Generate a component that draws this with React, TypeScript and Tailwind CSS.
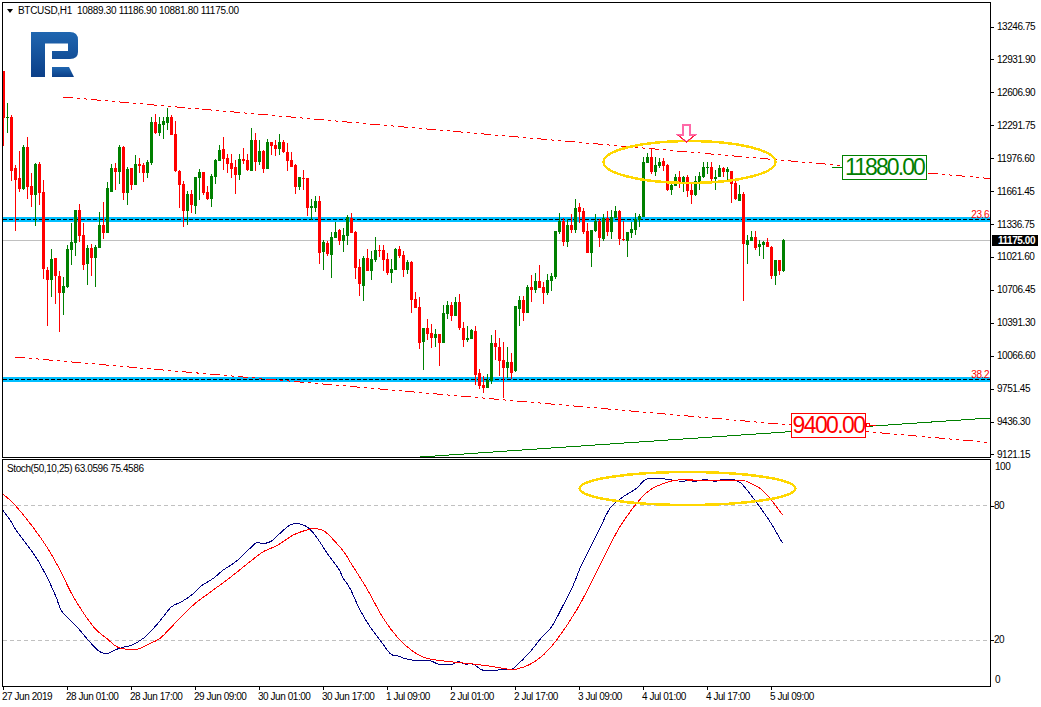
const candles: [string, number, number, number, number][] = [
  ["r",71,71,118,146],["g",103,117,118,133],["r",115,117,171,181],["r",165,168,180,231],["r",151,178,189,192],["g",145,147,189,190],
  ["r",137,147,187,199],["r",173,186,195,207],["g",163,164,195,226],["r",162,164,193,205],["r",180,192,269,279],["r",267,270,280,326],
  ["g",249,259,280,297],["r",258,258,276,304],["r",271,276,293,332],["g",277,286,293,315],["g",245,249,287,288],["g",223,242,250,265],
  ["g",210,210,243,256],["r",204,210,236,242],["r",223,235,265,270],["g",245,248,264,285],["r",244,248,258,276],["g",245,247,258,287],
  ["g",212,225,248,248],["r",202,225,233,239],["g",182,188,233,233],["g",164,168,192,192],["r",163,168,172,190],["g",145,147,172,184],
  ["r",146,147,193,200],["g",167,169,193,205],["r",168,168,185,190],["g",155,164,185,185],["r",158,164,166,173],["r",163,165,173,182],
  ["g",160,162,173,178],["g",117,122,163,165],["r",114,122,133,134],["g",117,124,133,136],["g",117,121,125,139],["g",108,117,123,130],
  ["r",115,117,135,135],["r",121,134,171,172],["r",170,171,185,208],["r",181,184,211,227],["g",191,194,211,225],["r",190,194,205,213],
  ["g",177,177,206,214],["g",169,172,178,200],["r",172,172,193,195],["r",186,192,199,200],["g",174,176,199,207],["g",159,160,177,184],
  ["g",145,150,161,161],["r",137,149,159,170],["r",154,158,164,173],["r",154,163,169,178],["r",160,167,175,194],["g",154,159,175,180],
  ["r",148,159,161,164],["r",154,160,170,171],["g",128,140,171,171],["r",133,140,162,171],["g",140,151,162,165],["r",150,151,169,173],
  ["g",139,142,169,169],["r",142,142,146,155],["r",140,145,149,156],["g",134,142,149,155],["r",140,142,152,153],["r",143,152,161,171],
  ["r",152,160,167,167],["r",164,165,187,194],["g",177,177,187,190],["r",170,178,179,190],["r",178,178,208,216],["g",199,206,208,220],
  ["g",196,201,208,212],["r",196,201,253,264],["g",240,242,252,270],["r",241,243,254,256],["g",232,237,255,278],["g",222,232,238,238],
  ["r",229,230,241,245],["g",228,235,241,252],["g",215,217,236,245],["r",213,218,233,233],["r",231,232,268,279],["r",259,267,284,296],
  ["g",256,258,286,301],["r",249,258,271,271],["g",251,259,271,280],["g",237,250,260,262],["r",245,250,251,257],["r",245,250,260,271],
  ["r",253,259,273,275],["g",259,269,273,283],["g",248,249,270,270],["r",246,249,256,258],["r",251,255,270,277],["g",260,262,270,274],
  ["r",261,262,300,313],["r",292,299,308,308],["r",297,307,343,349],["g",328,328,342,370],["r",319,328,334,340],["r",324,333,338,348],
  ["g",329,334,338,347],["r",334,334,343,366],["g",305,313,343,343],["g",301,305,314,319],["r",302,305,316,321],["g",297,302,316,316],
  ["r",294,302,328,330],["r",322,328,340,347],["g",326,338,340,342],["g",329,330,339,339],["r",326,331,375,385],["r",369,373,386,389],
  ["r",376,385,388,393],["g",374,380,388,388],["g",335,343,381,384],["r",330,343,347,360],["r",338,347,361,376],["r",342,360,368,398],
  ["g",347,362,368,378],["r",353,362,373,379],["g",306,306,371,372],["g",296,300,309,326],["r",296,300,313,321],["g",285,287,313,313],
  ["r",275,287,290,302],["g",273,281,290,293],["r",265,281,288,288],["r",282,287,293,304],["g",274,280,293,295],["g",273,276,281,291],
  ["g",231,231,277,279],["g",213,221,232,234],["r",218,221,242,246],["g",219,225,242,247],["r",214,225,230,233],["g",199,208,230,233],
  ["r",203,207,212,223],["r",208,211,232,234],["r",223,231,253,253],["g",230,230,253,267],["g",214,221,231,232],["r",219,221,238,247],
  ["g",214,218,239,241],["r",211,218,232,236],["g",210,217,232,239],["g",206,211,218,218],["r",210,211,239,245],["r",221,239,240,241],
  ["g",232,232,241,257],["g",222,229,233,238],["g",213,219,230,235],["g",214,216,220,227],["g",157,162,217,217],["g",153,157,163,163],
  ["r",148,157,172,174],["g",157,165,172,176],["g",158,162,166,168],["r",158,161,166,171],["r",164,165,190,191],["g",181,185,190,195],
  ["g",174,177,186,186],["r",171,177,184,188],["g",176,177,184,192],["r",175,177,191,197],["r",184,190,195,204],["g",176,181,195,196],
  ["g",172,176,182,190],["g",162,167,177,178],["g",162,167,168,174],["r",162,167,179,181],["g",170,177,179,190],["g",165,168,177,177],
  ["r",167,168,172,177],["g",167,169,172,182],["r",171,171,184,203],["r",181,183,199,200],["g",185,194,201,201],["r",192,194,244,301],
  ["g",235,240,245,264],["g",231,237,241,241],["r",231,237,248,250],["g",240,244,247,256],["g",241,242,245,259],["r",238,242,247,247],
  ["r",246,247,276,279],["g",260,260,276,285],["r",260,260,271,275],["g",239,240,271,272],
];

// curve points were read off at 3x, so each run carries its own origin
const toPath = (runs: [number, number, number[]][]) => {
  const pts = runs.flatMap(([ox, oy, v]) => {
    const out: [number, number][] = [];
    for (let i = 0; i < v.length; i += 2) out.push([ox + v[i] / 3, oy + v[i + 1] / 3]);
    return out;
  });
  // catmull-rom through the read points
  let d = `M${pts[0][0]} ${pts[0][1]}`;
  for (let i = 0; i < pts.length - 1; i++) {
    const a = pts[Math.max(i - 1, 0)];
    const b = pts[i];
    const c = pts[i + 1];
    const e = pts[Math.min(i + 2, pts.length - 1)];
    d += `C${b[0] + (c[0] - a[0]) / 6} ${b[1] + (c[1] - a[1]) / 6} ${c[0] - (e[0] - b[0]) / 6} ${c[1] - (e[1] - b[1]) / 6} ${c[0]} ${c[1]}`;
  }
  return d;
};

const blueLine = toPath([
  [0, 455, [8,165,30,195,50,228,80,268,115,318,150,385,170,430,185,468,230,515,260,550,290,583,305,593,322,596,345,585,365,578,395,570,430,550,465,515,490,485,515,455,545,440,575,420,605,392,640,370,670,345,710,318,750,280,770,263,790,266,815,258,840,235,875,208,915,212,945,240,985,300,1015,340,1030,370]],
  [350, 455, [0,400,30,465,60,515,90,555,122,597,145,603,165,611,195,616,240,617,265,627,305,628,325,620,345,627,370,628,400,646,445,645,470,642,487,642,520,612,545,585,570,553,605,515,640,450,670,390,690,340,710,298,745,230,780,160,820,125,860,100,890,72,945,72,985,78,1030,77]],
  [690, 340, [0,421,15,424,45,419,75,424,95,419,125,418,150,427,175,455,205,495,240,545,278,610]],
]);

const redLine = toPath([
  [0, 455, [8,117,40,145,90,205,140,275,180,345,220,425,280,515,320,550,350,575,375,582,412,583,440,570,480,550,520,510,580,450,640,405,700,360,750,320,790,290,830,272,880,240,920,225,945,220,975,230,1010,265,1035,295]],
  [350, 455, [0,320,50,400,100,490,145,550,190,590,230,610,300,620,370,627,430,635,470,642,500,642,540,628,580,600,620,555,680,465,730,370,770,290,810,215,860,145,900,105,950,82,985,75,1030,75]],
  [690, 340, [0,421,150,422,175,427,210,445,240,475,278,525]],
]);

const prices = ["13246.75","12931.90","12606.90","12291.75","11976.60","11661.45","11336.75","11021.60","10706.45","10391.30","10066.60","9751.45","9436.30","9121.15"];
const dates = ["27 Jun 2019","28 Jun 01:00","28 Jun 17:00","29 Jun 09:00","30 Jun 01:00","30 Jun 17:00","1 Jul 09:00","2 Jul 01:00","2 Jul 17:00","3 Jul 09:00","4 Jul 01:00","4 Jul 17:00","5 Jul 09:00"];

function Logo() {
  return (
    <svg className="absolute left-[28px] top-[29px]" width="50" height="48" viewBox="31 32 50 48">
      <defs>
        <linearGradient id="logoBlue" x1="0" y1="0" x2="0" y2="1">
          <stop offset="0" stopColor="#1f66b0" />
          <stop offset="1" stopColor="#0b3f88" />
        </linearGradient>
      </defs>
      <path fill="url(#logoBlue)" d="M31 32H70Q78 32 78 40V52Q78 59 70 59H52V51H68V43.500H45V77H31Z" />
      <path fill="url(#logoBlue)" d="M52 67H69L74 77H52Z" />
    </svg>
  );
}

function MainChart() {
  return (
    <svg className="block" width="987" height="454" viewBox="3 3 987 454" shapeRendering="crispEdges">
      <rect x="3" y="217" width="987" height="5" fill="#00bfff" />
      <rect x="3" y="377" width="987" height="5" fill="#00bfff" />
      <line x1="3" y1="219.500" x2="990" y2="219.500" stroke="#000" strokeDasharray="4 2" />
      <line x1="3" y1="379.500" x2="990" y2="379.500" stroke="#000" strokeDasharray="4 2" />
      <line x1="3" y1="240.500" x2="990" y2="240.500" stroke="#c0c0c0" />
      <line x1="63" y1="97" x2="990" y2="178.500" stroke="#ff0000" strokeDasharray="10 4 3 4 3 4" />
      <line x1="15" y1="357" x2="990" y2="442.500" stroke="#ff0000" strokeDasharray="10 4 3 4 3 4" />
      <line x1="420" y1="457" x2="990" y2="418" stroke="#008000" />
      {candles.map(([c, hi, top, bot, lo], i) => (
        <g key={i} fill={c === "r" ? "#ff0000" : "#008000"}>
          <rect x={3 + 4 * i} y={hi} width="1" height={lo - hi} />
          <rect x={2 + 4 * i} y={top} width="3" height={Math.max(bot - top, 1)} />
        </g>
      ))}
      <ellipse cx="689.500" cy="162" rx="86" ry="21" fill="none" stroke="#ffd700" strokeWidth="2.500" />
      <path d="M683 125H690V135H695L686.500 142L678 135H683Z" fill="#fff" stroke="#ff69a8" strokeWidth="1.500" />
      <path d="M678 135L686.500 142L695 135" fill="none" stroke="#ff2040" />
      <line x1="832" y1="167.500" x2="842" y2="167.500" stroke="#008000" />
      <line x1="866" y1="425.500" x2="876" y2="425.500" stroke="#ff0000" />
      <rect x="866.500" y="423.500" width="3" height="3" fill="#fff" stroke="#ff0000" />
    </svg>
  );
}

function StochChart() {
  return (
    <svg className="block" width="987" height="226" viewBox="3 460 987 226" shapeRendering="crispEdges">
      <line x1="3" y1="505.500" x2="990" y2="505.500" stroke="#c0c0c0" strokeDasharray="4 3" />
      <line x1="3" y1="640.500" x2="990" y2="640.500" stroke="#c0c0c0" strokeDasharray="4 3" />
      <path d={blueLine} fill="none" stroke="#000080" />
      <path d={redLine} fill="none" stroke="#ff0000" />
      <ellipse cx="687.500" cy="488.500" rx="108" ry="16.500" fill="none" stroke="#ffd700" strokeWidth="2.500" />
    </svg>
  );
}

export default function App() {
  return (
    <div className="w-[1041px] h-[707px] bg-white overflow-hidden flex pl-[2px] pt-[2px] text-black text-[10px] leading-3 tracking-[-0.45px] [font-family:'Liberation_Sans',sans-serif]">
      <div className="w-[989px] shrink-0">
        <div className="relative h-[456px] border border-black">
          <MainChart />
          <div className="absolute left-[4px] top-[2px] flex items-center gap-[2px] tracking-[-0.3px]">
            <span className="w-0 h-0 border-x-[3px] border-t-[4px] border-x-transparent border-t-black" />
            <span className="whitespace-pre ml-[3px]">BTCUSD,H1{"  "}10889.30 11186.90 10881.80 11175.00</span>
          </div>
          <Logo />
          <div className="absolute left-[839px] top-[152px] w-[85px] h-[25px] border border-[#008000] bg-white flex items-center justify-center text-[23px] leading-none tracking-[-1.9px] text-[#008000]">
            11880.00
          </div>
          <div className="absolute left-[788px] top-[410px] w-[75px] h-[25px] border border-[#ff0000] bg-white flex items-center justify-center text-[23px] leading-none tracking-[-1.6px] text-[#ff0000]">
            9400.00
          </div>
          <span className="absolute right-[1px] top-[206px] text-[#ff0000]">23.6</span>
          <span className="absolute right-[1px] top-[366px] text-[#ff0000]">38.2</span>
        </div>
        <div className="h-px" />
        <div className="relative h-[228px] border border-black">
          <StochChart />
          <span className="absolute left-[4px] top-[3px] tracking-[-0.4px]">Stoch(50,10,25) 63.0596 75.4586</span>
        </div>
        <div className="flex pl-px">
          {dates.map((d) => (
            <div key={d} className="w-16 shrink-0">
              <div className="w-px h-[3px] bg-black" />
              <div className="-ml-px mt-[1px] whitespace-nowrap">{d}</div>
            </div>
          ))}
        </div>
      </div>
      <div className="relative flex-1">
        <div className="h-[459px] pt-[19px] flex flex-col justify-between">
          {prices.map((p) => (
            <div key={p} className="h-3 flex items-center">
              <div className="w-[3px] h-px bg-black" />
              <span className="ml-[3px]">{p}</span>
            </div>
          ))}
        </div>
        <div className="absolute left-[1px] top-[233px] w-[46px] h-[11px] bg-black text-white font-bold flex items-center justify-end pr-[3px]">
          11175.00
        </div>
        <div>
          <div className="h-3 pl-[4px] leading-3">100</div>
          <div className="h-3 mt-[27px] flex items-center">
            <div className="w-[3px] h-px bg-black" />
            <span>80</span>
          </div>
          <div className="h-3 mt-[122px] flex items-center">
            <div className="w-[3px] h-px bg-black" />
            <span>20</span>
          </div>
          <div className="h-3 mt-[28px] pl-[4px]">0</div>
        </div>
      </div>
    </div>
  );
}
